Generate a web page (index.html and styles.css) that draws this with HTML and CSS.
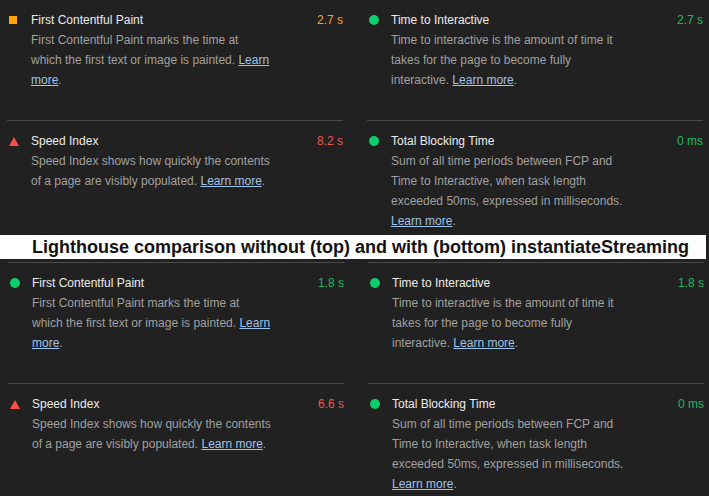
FILE: index.html
```html
<!DOCTYPE html>
<html lang="en">
<head>
<meta charset="utf-8">
<title>Lighthouse comparison</title>
<link rel="stylesheet" href="styles.css">
</head>
<body>
<section class="panel panel-top">
  <div class="grid">
    <div class="metric first">
      <div class="head"><span class="icon-box"><span class="icon square"></span></span><span class="title">First Contentful Paint</span><span class="value avg">2.7 s</span></div>
      <div class="desc">First Contentful Paint marks the time at<br>which the first text or image is painted. <a href="#">Learn<br>more</a>.</div>
    </div>
    <div class="metric first">
      <div class="head"><span class="icon-box"><span class="icon dot"></span></span><span class="title">Time to Interactive</span><span class="value pass">2.7 s</span></div>
      <div class="desc">Time to interactive is the amount of time it<br>takes for the page to become fully<br>interactive. <a href="#">Learn more</a>.</div>
    </div>
    <div class="metric">
      <div class="head"><span class="icon-box"><span class="icon tri"></span></span><span class="title">Speed Index</span><span class="value fail">8.2 s</span></div>
      <div class="desc">Speed Index shows how quickly the contents<br>of a page are visibly populated. <a href="#">Learn more</a>.</div>
    </div>
    <div class="metric">
      <div class="head"><span class="icon-box"><span class="icon dot"></span></span><span class="title">Total Blocking Time</span><span class="value pass">0 ms</span></div>
      <div class="desc">Sum of all time periods between FCP and<br>Time to Interactive, when task length<br>exceeded 50ms, expressed in milliseconds.<br><a href="#">Learn more</a>.</div>
    </div>
  </div>
</section>
<div class="caption">Lighthouse comparison without (top) and with (bottom) instantiateStreaming</div>
<section class="panel panel-bottom">
  <div class="grid">
    <div class="metric">
      <div class="head"><span class="icon-box"><span class="icon dot"></span></span><span class="title">First Contentful Paint</span><span class="value pass">1.8 s</span></div>
      <div class="desc">First Contentful Paint marks the time at<br>which the first text or image is painted. <a href="#">Learn<br>more</a>.</div>
    </div>
    <div class="metric">
      <div class="head"><span class="icon-box"><span class="icon dot"></span></span><span class="title">Time to Interactive</span><span class="value pass">1.8 s</span></div>
      <div class="desc">Time to interactive is the amount of time it<br>takes for the page to become fully<br>interactive. <a href="#">Learn more</a>.</div>
    </div>
    <div class="metric">
      <div class="head"><span class="icon-box"><span class="icon tri"></span></span><span class="title">Speed Index</span><span class="value fail">6.6 s</span></div>
      <div class="desc">Speed Index shows how quickly the contents<br>of a page are visibly populated. <a href="#">Learn more</a>.</div>
    </div>
    <div class="metric">
      <div class="head"><span class="icon-box"><span class="icon dot"></span></span><span class="title">Total Blocking Time</span><span class="value pass">0 ms</span></div>
      <div class="desc">Sum of all time periods between FCP and<br>Time to Interactive, when task length<br>exceeded 50ms, expressed in milliseconds.<br><a href="#">Learn more</a>.</div>
    </div>
  </div>
</section>
</body>
</html>
```

FILE: styles.css
```css
* { box-sizing: border-box; }

html, body {
  margin: 0;
  padding: 0;
  background: #212121;
}

body {
  font-family: "Liberation Sans", Arial, sans-serif;
  font-size: 12px;
  color: #ececec;
  width: 709px;
  height: 496px;
  overflow: hidden;
}

.panel {
  overflow: hidden;
  background: #212121;
}

.panel-top {
  height: 235px;
}

.panel-bottom {
  height: 237px;
  padding-top: 3px;
  padding-left: 1px;
}

.grid {
  display: grid;
  grid-template-columns: 336px 336px;
  column-gap: 24px;
  padding-left: 7px;
}

.metric {
  border-top: 1px solid #4a4a4a;
  padding: 10px 0 30px 0;
}

.metric.first {
  border-top: none;
}

.head {
  display: flex;
  align-items: center;
  height: 20px;
  line-height: 20px;
}

.icon-box {
  width: 24px;
  flex: none;
  display: flex;
  align-items: center;
  padding-left: 2px;
}

.icon { display: block; }

.icon.square {
  width: 8px;
  height: 8px;
  background: #ffa400;
}

.icon.dot {
  width: 10px;
  height: 10px;
  border-radius: 50%;
  background: #0cce6b;
}

.icon.tri {
  width: 0;
  height: 0;
  border-left: 5px solid transparent;
  border-right: 5px solid transparent;
  border-bottom: 9px solid #ff4e42;
}

.title {
  flex: 1;
  color: #ececec;
}

.value.avg { color: #eea43a; }
.value.pass { color: #1cba63; }
.value.fail { color: #ee5a4e; }

.desc {
  padding-left: 24px;
  line-height: 20px;
  color: #a0a0a0;
  white-space: nowrap;
}

.desc a {
  color: #9fc3ea;
  text-decoration: underline;
}

.caption {
  height: 24px;
  margin-right: 3px;
  background: #ffffff;
  color: #111111;
  font-family: "Liberation Sans", Arial, sans-serif;
  font-weight: bold;
  font-size: 18px;
  line-height: 24px;
  padding-left: 32px;
  white-space: nowrap;
}
```
